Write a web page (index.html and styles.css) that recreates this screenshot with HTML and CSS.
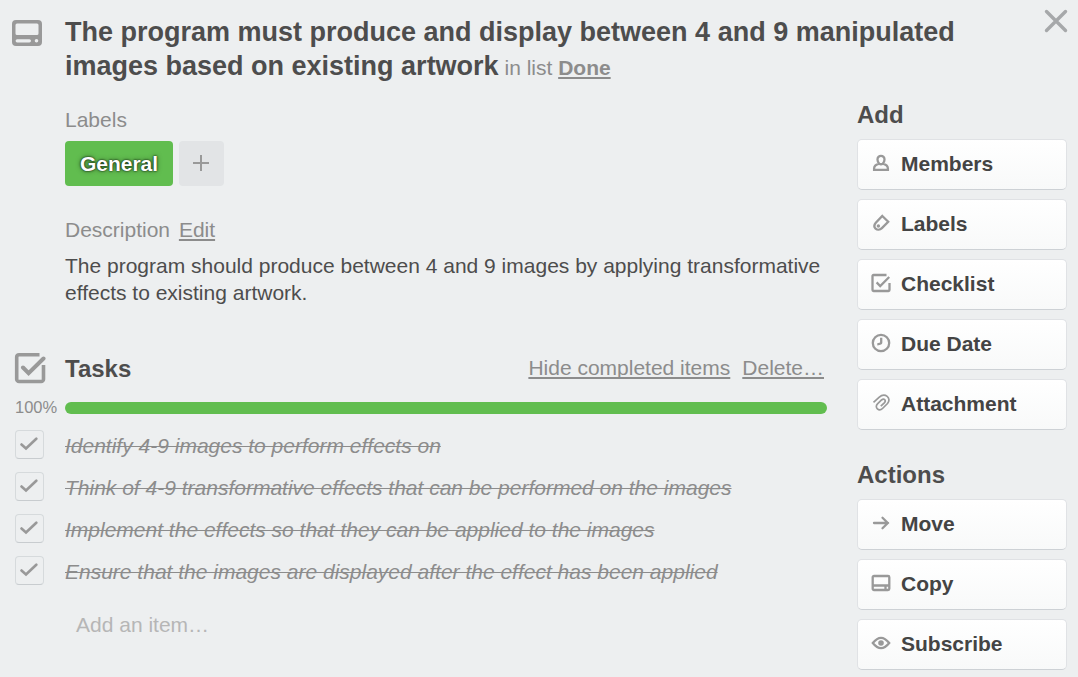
FILE: index.html
```html
<!DOCTYPE html>
<html lang="en">
<head>
<meta charset="utf-8">
<title>Card details</title>
<link rel="stylesheet" href="styles.css">
</head>
<body>
<svg class="defs" aria-hidden="true">
  <symbol id="i-card" viewBox="0 0 30 26"><path fill="currentColor" fill-rule="evenodd" d="M4 0h22a4 4 0 0 1 4 4v18a4 4 0 0 1-4 4H4a4 4 0 0 1-4-4V4a4 4 0 0 1 4-4zM5 3.500h20a1.500 1.500 0 0 1 1.500 1.500V13.500a1.500 1.500 0 0 1-1.500 1.500H5a1.500 1.500 0 0 1-1.500-1.500V5A1.500 1.500 0 0 1 5 3.500zM5.200 19.200a1.600 1.600 0 0 0 0 3.200h12.200a1.600 1.600 0 0 0 0-3.200zM24.500 19a1.800 1.800 0 1 0 0 3.600 1.800 1.800 0 0 0 0-3.600z"/></symbol>
  <symbol id="i-check" viewBox="0 0 18 14"><path d="M1.500 7.500 6 11.500 16.300 1.700" fill="none" stroke="currentColor" stroke-width="2.600" stroke-linecap="round"/></symbol>
</svg>
<div class="card">
  <header class="header">
    <svg class="header-icon"><use href="#i-card"/></svg>
    <h1 class="title">The program must produce and display between 4 and 9 manipulated<br>images based on existing artwork<small class="in-list"> in list <a class="link list-name">Done</a></small></h1>
    <svg class="close" viewBox="0 0 24 24"><path d="M2.500 2.500l19 19M21.500 2.500l-19 19"/></svg>
  </header>
  <div class="body">
    <main class="main">
      <section class="labels">
        <h2 class="caption">Labels</h2>
        <div class="label-row">
          <span class="label">General</span>
          <span class="label-add"><svg viewBox="0 0 16 16"><path d="M8 0v16M0 8h16"/></svg></span>
        </div>
      </section>
      <section class="description">
        <h2 class="caption">Description <a class="link edit">Edit</a></h2>
        <p class="text">The program should produce between 4 and 9 images by applying transformative<br>effects to existing artwork.</p>
      </section>
      <section class="tasks">
        <div class="tasks-head">
          <svg class="tasks-icon" viewBox="0 0 32 32"><path d="M25.500 2.700H5a2.300 2.300 0 0 0-2.300 2.300v22.200a2.300 2.300 0 0 0 2.300 2.300h22.200a2.300 2.300 0 0 0 2.300-2.300V13" fill="none" stroke="currentColor" stroke-width="3.600"/><path d="M9 15.500l5.600 5.600L29.500 6.500" fill="none" stroke="#edeff0" stroke-width="6.500" stroke-linecap="round"/><path d="M9 15.500l5.600 5.600L29.500 6.500" fill="none" stroke="currentColor" stroke-width="4" stroke-linecap="round"/></svg>
          <h2 class="heading tasks-title">Tasks</h2>
          <a class="link hide">Hide completed items</a>
          <a class="link delete">Delete…</a>
        </div>
        <div class="progress"><span class="percent">100%</span><span class="bar"></span></div>
        <ul class="items">
          <li class="item"><span class="box"><svg><use href="#i-check"/></svg></span><span class="done">Identify 4-9 images to perform effects on</span></li>
          <li class="item"><span class="box"><svg><use href="#i-check"/></svg></span><span class="done">Think of 4-9 transformative effects that can be performed on the images</span></li>
          <li class="item"><span class="box"><svg><use href="#i-check"/></svg></span><span class="done">Implement the effects so that they can be applied to the images</span></li>
          <li class="item"><span class="box"><svg><use href="#i-check"/></svg></span><span class="done">Ensure that the images are displayed after the effect has been applied</span></li>
        </ul>
        <p class="add-item">Add an item…</p>
      </section>
    </main>
    <aside class="side">
      <h2 class="heading">Add</h2>
      <nav class="buttons">
        <a class="button"><svg viewBox="0 0 20 20"><path d="M10 2.800a3.500 3.500 0 0 1 3.500 3.600c0 1.900-.7 3.200-1.600 4.200 2.800.8 5 2.300 5 4.800v1.400H3.100v-1.400c0-2.500 2.200-4 5-4.800-.9-1-1.600-2.300-1.600-4.200A3.500 3.500 0 0 1 10 2.800zM8.100 10.600q1.900 1.300 3.800 0"/></svg>Members</a>
        <a class="button"><svg viewBox="0 0 20 20"><path d="M11.300 3l5.900 5.800-6.300 6.300c-2 2-4.700 2-6.300.6-1.500-1.500-1.500-4 .2-6z"/><circle class="solid" cx="7.400" cy="13" r="1.700"/></svg>Labels</a>
        <a class="button"><svg viewBox="0 0 20 20"><path d="M15.500 2H2.500a1 1 0 0 0-1 1v14a1 1 0 0 0 1 1h15a1 1 0 0 0 1-1v-7"/><path d="M5.600 9.400l3.600 3.600 9-9"/></svg>Checklist</a>
        <a class="button"><svg viewBox="0 0 20 20"><circle cx="10" cy="10" r="8.200"/><path d="M10.200 4.800v4.800q0 1.500-3.900 1.700"/></svg>Due Date</a>
        <a class="button"><svg viewBox="0 0 20 20"><path class="thin" d="M2.500 9.300L8 4.300C14-1 21 5 16.500 10.500l-5 5C8 19 3 14.500 6.500 10.800L10.500 7c2.500-2.200 5 .5 2.800 2.800l-3.500 3.400"/></svg>Attachment</a>
      </nav>
      <h2 class="heading actions">Actions</h2>
      <nav class="buttons">
        <a class="button"><svg viewBox="0 0 20 20"><path d="M3 10h14M11.500 4.800l5.300 5.200-5.300 5.200" stroke-linecap="round"/></svg>Move</a>
        <a class="button"><svg viewBox="0 0 20 20"><path d="M3 3h14a1.300 1.300 0 0 1 1.300 1.300v11.400a1.300 1.300 0 0 1-1.300 1.300H3a1.300 1.300 0 0 1-1.300-1.300V4.300A1.300 1.300 0 0 1 3 3zM2 12.500h16M14.500 12.500v4"/></svg>Copy</a>
        <a class="button"><svg viewBox="0 0 20 20"><path d="M1.800 10Q10-.3 18.200 10 10 20.300 1.800 10z"/><circle class="solid" cx="10" cy="10" r="2.800"/></svg>Subscribe</a>
      </nav>
    </aside>
  </div>
</div>
</body>
</html>
```

FILE: styles.css
```css
* { box-sizing: border-box; }
body { margin: 0; background: #edeff0; color: #4d4d4d; font: 21px/24px "Liberation Sans", Arial, sans-serif; overflow: hidden; }
h1, h2, p, ul { margin: 0; padding: 0; font-weight: normal; list-style: none; }
svg { display: block; flex: none; }
.defs { width: 0; height: 0; position: absolute; }
.card { height: 677px; overflow: hidden; }
.header { display: flex; height: 83px; padding: 15px 10px 0 12px; }
.header-icon { width: 30px; height: 26px; margin: 5px 23px 0 0; color: #999; }
.title { flex: 1; font-size: 27px; line-height: 34px; font-weight: bold; white-space: nowrap; }
.in-list { font-size: 21px; font-weight: normal; color: #8c8c8c; }
.list-name { font-weight: bold; }
.close { width: 24px; height: 24px; margin-top: -6px; fill: none; stroke: #a6a8aa; stroke-width: 3.4; stroke-linecap: round; }
.link { color: #8c8c8c; text-decoration: underline; text-decoration-thickness: 2px; text-underline-offset: 2px; text-decoration-skip-ink: none; }
.body { display: flex; justify-content: space-between; padding: 0 11px 0 15px; }
.main { width: 812px; padding-top: 25px; white-space: nowrap; }
.labels, .description { padding-left: 50px; }
.caption { font-size: 21px; color: #8c8c8c; }
.label-row { display: flex; gap: 6px; margin-top: 9px; }
.label { width: 108px; height: 45px; border-radius: 4px; background: #61bd4f; color: #fff; font-weight: bold; line-height: 45px; text-align: center; text-shadow: 0 0 5px rgba(0,0,0,.5), 0 0 2px #000; }
.label-add { display: grid; place-items: center; width: 45px; height: 45px; padding: 0 1px 1px 0; border-radius: 4px; background: #e2e4e6; }
.label-add svg { width: 16px; height: 16px; fill: none; stroke: #999; stroke-width: 2; }
.description { margin-top: 32px; }
.edit { margin-left: 3px; }
.text { margin-top: 10px; line-height: 27px; }
.heading { font-size: 24px; line-height: 28px; font-weight: bold; }
.tasks { margin-top: 45px; }
.tasks-head { display: flex; height: 34px; padding-right: 3px; }
.tasks-icon { width: 32px; height: 32px; margin: 1px 19px 0 -1px; color: #999; }
.tasks-title { margin: 4px auto 0 0; }
.hide, .delete { margin-top: 5px; }
.hide { margin-right: 12px; }
.progress { display: flex; align-items: center; height: 24px; margin-top: 11px; }
.percent { width: 50px; padding-bottom: 2px; font-size: 16.5px; color: #8c8c8c; }
.bar { width: 762px; height: 12px; border-radius: 6px; background: #61bd4f; }
.items { margin-top: 10px; }
.item { display: flex; height: 42px; }
.box { display: grid; place-items: center; width: 29px; height: 29px; padding: 0 1px 1px 0; margin-right: 21px; border: 1px solid #d6dadc; border-bottom-color: #c8cccf; border-radius: 4px; color: #999; }
.box svg { width: 18px; height: 14px; }
.done { margin-top: 4px; font-style: italic; color: #8c8c8c; text-decoration: line-through; text-decoration-thickness: 1px; }
.add-item { margin: 15px 0 0 61px; color: #b6b6b6; }
.side { width: 210px; padding-top: 18px; }
.actions { margin-top: 31px; }
.buttons { display: grid; gap: 9px; margin-top: 10px; }
.button { display: flex; align-items: center; height: 51px; padding: 0 0 2px 13px; border: 1px solid #e0e2e5; border-bottom-color: #cdd1d5; border-radius: 5px; background: linear-gradient(#fff, #f8f9f9); color: #444; font-weight: bold; }
.button svg { width: 20px; height: 20px; margin: 0 10px 1px 0; fill: none; stroke: #999; stroke-width: 2.3; }
.button .solid { fill: #999; stroke: none; }
.button .thin { stroke-width: 1.7; }
```
